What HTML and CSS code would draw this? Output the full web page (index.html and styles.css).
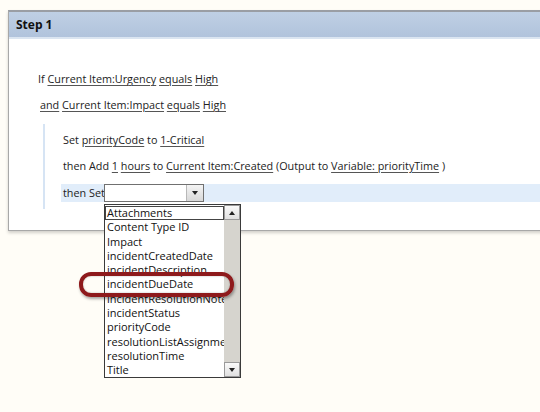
FILE: index.html
```html
<!DOCTYPE html>
<html>
<head>
<meta charset="utf-8">
<link rel="stylesheet" href="styles.css">
</head>
<body>
<div class="page">
  <div class="panel">
    <div class="header">Step 1</div>
    <div class="body">
      <div class="row cond">If <span class="lk">Current Item:Urgency</span> <span class="lk">equals</span> <span class="lk">High</span></div>
      <div class="row cond and"><span class="lk">and</span> <span class="lk">Current Item:Impact</span> <span class="lk">equals</span> <span class="lk">High</span></div>
      <div class="actions">
        <div class="row">Set <span class="lk">priorityCode</span> to <span class="lk">1-Critical</span></div>
        <div class="row">then Add <span class="lk">1</span> <span class="lk">hours</span> to <span class="lk">Current Item:Created</span> (Output to <span class="lk">Variable: priorityTime</span> )</div>
        <div class="row active">then Set<span class="select"><span class="selbtn"><span class="tri"></span></span></span></div>
      </div>
    </div>
  </div>
  <div class="listbox">
    <div class="items">
      <div class="item first">Attachments</div>
      <div class="item">Content Type ID</div>
      <div class="item">Impact</div>
      <div class="item">incidentCreatedDate</div>
      <div class="item">incidentDescription</div>
      <div class="item">incidentDueDate</div>
      <div class="item">incidentResolutionNote</div>
      <div class="item">incidentStatus</div>
      <div class="item">priorityCode</div>
      <div class="item">resolutionListAssignme</div>
      <div class="item">resolutionTime</div>
      <div class="item">Title</div>
    </div>
    <div class="scroll">
      <div class="sbtn"><span class="up"></span></div>
      <div class="track"></div>
      <div class="sbtn"><span class="down"></span></div>
    </div>
  </div>
  <div class="mark"></div>
</div>
</body>
</html>
```
FILE: styles.css
```css
html, body { margin: 0; padding: 0; }
body {
  background: #fffdf7;
  font-family: "Open Sans", "Noto Sans", sans-serif;
  font-size: 10.8px;
  color: #222;
  width: 540px;
  height: 412px;
  overflow: hidden;
}
.page {
  position: relative;
  padding: 10px 0 0 8px;
}
.panel {
  width: 540px;
  height: 218px;
  background: #fff;
  border: 1px solid #a8a8a8;
  border-top: 2px solid #9a9ea4;
  border-right: none;
  box-shadow: 0 2px 3px rgba(0,0,0,0.18);
}
.header {
  height: 25px;
  line-height: 25px;
  padding-left: 7px;
  font-weight: bold;
  font-size: 12px;
  color: #111;
  background: linear-gradient(#bfd0e4, #b1c3dc);
  border-bottom: 2px solid #dbe5f1;
}
.body {
  padding: 27px 0 0 29px;
}
.row {
  height: 26px;
  line-height: 26px;
  white-space: nowrap;
}
.cond.and { padding-left: 2px; }
.lk {
  text-decoration: underline;
  text-decoration-color: #555;
  text-underline-offset: 2px;
}
.actions {
  margin: 6px 0 0 5px;
  padding: 3px 0 7px 18px;
  border-left: 2px solid #d6e4f4;
}
.row.active {
  height: 18px;
  line-height: 18px;
  margin-top: 5px;
  margin-left: -2px;
  padding-left: 2px;
  background: #e1edfa;
  display: flex;
  align-items: center;
}
.select {
  display: flex;
  justify-content: flex-end;
  width: 98px;
  height: 16px;
  border: 1px solid #707070;
  background: #fff;
  margin-left: -1px;
}
.selbtn {
  width: 16px;
  height: 16px;
  background: linear-gradient(#f4f4f4, #d8d8d8);
  border-left: 1px solid #b8b8b8;
  display: flex;
  align-items: center;
  justify-content: center;
}
.tri {
  width: 0; height: 0;
  border-left: 3px solid transparent;
  border-right: 3px solid transparent;
  border-top: 4px solid #222;
}
.listbox {
  position: absolute;
  left: 104px;
  top: 204px;
  width: 135px;
  height: 172px;
  border: 1px solid #3a3a3a;
  background: #fff;
  display: flex;
  font-size: 11px;
  color: #111;
}
.items {
  flex: 1;
  padding-top: 1px;
  overflow: hidden;
}
.item {
  height: 14.3px;
  line-height: 14px;
  padding-left: 2px;
  white-space: nowrap;
  overflow: hidden;
}
.item.first {
  outline: 1px solid #444;
  outline-offset: -1px;
}
.scroll {
  width: 16px;
  display: flex;
  flex-direction: column;
  background: #d8d6d0;
}
.sbtn {
  height: 15px;
  background: linear-gradient(#fafafa, #e0e0e0);
  border: 1px solid #9a9a9a;
  box-sizing: border-box;
  display: flex;
  align-items: center;
  justify-content: center;
}
.track { flex: 1; background: #d6d4ce; }
.up {
  width: 0; height: 0;
  border-left: 3px solid transparent;
  border-right: 3px solid transparent;
  border-bottom: 4px solid #222;
}
.down {
  width: 0; height: 0;
  border-left: 3px solid transparent;
  border-right: 3px solid transparent;
  border-top: 4px solid #222;
}
.mark {
  position: absolute;
  left: 79px;
  top: 272px;
  width: 147px;
  height: 17px;
  border: 4px solid #8e1a1c;
  border-radius: 12px;
  box-shadow: 1px 2px 3px rgba(0,0,0,0.35), inset 0 0 2px rgba(0,0,0,0.3);
}
```
